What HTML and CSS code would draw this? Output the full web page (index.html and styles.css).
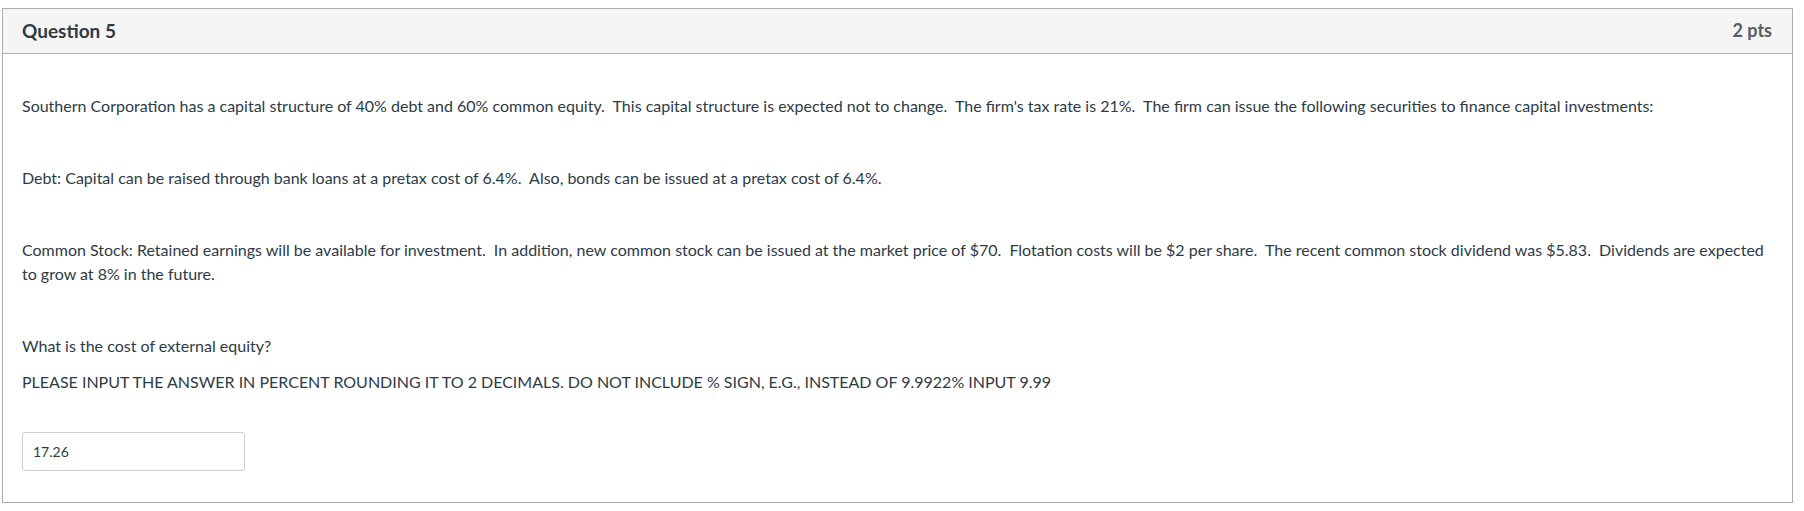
FILE: index.html
```html
<!DOCTYPE html>
<html>
<head>
<meta charset="utf-8">
<link rel="stylesheet" href="styles.css">
</head>
<body>
<div class="question">
  <div class="q-header">
    <span class="q-title">Question 5</span>
    <span class="q-points">2 pts</span>
  </div>
  <div class="q-body">
    <p>Southern Corporation has a capital structure of 40% debt and 60% common equity.&nbsp; This capital structure is expected not to change.&nbsp; The firm's tax rate is 21%.&nbsp; The firm can issue the following securities to finance capital investments:</p>
    <p>&nbsp;</p>
    <p>Debt: Capital can be raised through bank loans at a pretax cost of 6.4%.&nbsp; Also, bonds can be issued at a pretax cost of 6.4%.</p>
    <p>&nbsp;</p>
    <p>Common Stock: Retained earnings will be available for investment.&nbsp; In addition, new common stock can be issued at the market price of $70.&nbsp; Flotation costs will be $2 per share.&nbsp; The recent common stock dividend was $5.83.&nbsp; Dividends are expected to grow at 8% in the future.</p>
    <p>&nbsp;</p>
    <p>What is the cost of external equity?</p>
    <p>PLEASE INPUT THE ANSWER IN PERCENT ROUNDING IT TO 2 DECIMALS. DO NOT INCLUDE % SIGN, E.G., INSTEAD OF 9.9922% INPUT 9.99</p>
    <div class="answer">
      <input class="answer-input" type="text" value="17.26">
    </div>
  </div>
</div>
</body>
</html>
```

FILE: styles.css
```css
html, body {
  margin: 0;
  padding: 0;
  background: #ffffff;
}

body {
  font-family: Lato, "Open Sans", sans-serif;
  color: #2d3b45;
}

.question {
  margin: 8px 0 0 2px;
  width: 1791px;
  height: 495px;
  box-sizing: border-box;
  border: 1px solid #a9aeb2;
  background: #ffffff;
}

.q-header {
  height: 45px;
  box-sizing: border-box;
  background: #f5f5f5;
  border-bottom: 1px solid #a9aeb2;
  display: flex;
  align-items: center;
  justify-content: space-between;
  padding: 0 20px 2px 19px;
  font-weight: 700;
  font-size: 19px;
  color: #2d3b45;
}

.q-points {
  color: #555e66;
  font-size: 18px;
}

.q-body {
  padding: 40px 20px 0 19px;
  font-size: 16px;
  line-height: 24px;
}

.q-body p {
  margin: 0 0 12px 0;
}

.answer {
  padding-top: 26px;
}

.answer-input {
  display: block;
  width: 223px;
  height: 39px;
  box-sizing: border-box;
  border: 1px solid #c7cdd1;
  border-radius: 3px;
  padding: 0 10px;
  font-family: Lato, "Open Sans", sans-serif;
  font-size: 14px;
  color: #2d3b45;
  background: #ffffff;
}
```
